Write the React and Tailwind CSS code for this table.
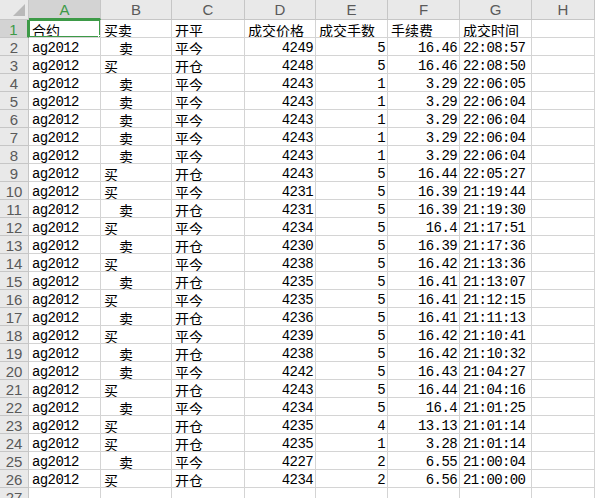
import React from 'react';

const rows = [
    ['ag2012', 's', '平今', '4249', '5', '16.46', '22:08:57'],
    ['ag2012', 'b', '开仓', '4248', '5', '16.46', '22:08:50'],
    ['ag2012', 's', '平今', '4243', '1', '3.29', '22:06:05'],
    ['ag2012', 's', '平今', '4243', '1', '3.29', '22:06:04'],
    ['ag2012', 's', '平今', '4243', '1', '3.29', '22:06:04'],
    ['ag2012', 's', '平今', '4243', '1', '3.29', '22:06:04'],
    ['ag2012', 's', '平今', '4243', '1', '3.29', '22:06:04'],
    ['ag2012', 'b', '开仓', '4243', '5', '16.44', '22:05:27'],
    ['ag2012', 'b', '平今', '4231', '5', '16.39', '21:19:44'],
    ['ag2012', 's', '开仓', '4231', '5', '16.39', '21:19:30'],
    ['ag2012', 'b', '平今', '4234', '5', '16.4', '21:17:51'],
    ['ag2012', 's', '开仓', '4230', '5', '16.39', '21:17:36'],
    ['ag2012', 'b', '平今', '4238', '5', '16.42', '21:13:36'],
    ['ag2012', 's', '开仓', '4235', '5', '16.41', '21:13:07'],
    ['ag2012', 'b', '平今', '4235', '5', '16.41', '21:12:15'],
    ['ag2012', 's', '开仓', '4236', '5', '16.41', '21:11:13'],
    ['ag2012', 'b', '平今', '4239', '5', '16.42', '21:10:41'],
    ['ag2012', 's', '开仓', '4238', '5', '16.42', '21:10:32'],
    ['ag2012', 's', '平今', '4242', '5', '16.43', '21:04:27'],
    ['ag2012', 'b', '开仓', '4243', '5', '16.44', '21:04:16'],
    ['ag2012', 's', '平今', '4234', '5', '16.4', '21:01:25'],
    ['ag2012', 'b', '开仓', '4235', '4', '13.13', '21:01:14'],
    ['ag2012', 'b', '开仓', '4235', '1', '3.28', '21:01:14'],
    ['ag2012', 's', '平今', '4227', '2', '6.55', '21:00:04'],
    ['ag2012', 'b', '开仓', '4234', '2', '6.56', '21:00:00'],
];

const headers = ['合约', '买卖', '开平', '成交价格', '成交手数', '手续费', '成交时间'];
const letters = ['A', 'B', 'C', 'D', 'E', 'F', 'G', 'H'];

const cjk = "font-['Noto_Sans_CJK_SC',sans-serif] text-[14px]";
const mono = "font-['Liberation_Mono','Noto_Sans_CJK_SC',monospace] text-[14px] tracking-[-0.6px]";
const cell = 'h-[18px] pt-[2px] border-r border-b border-[#d4d4d4] flex items-center overflow-hidden whitespace-nowrap text-black leading-none';
const rowHead = 'h-[18px] pt-[1px] border-r border-b border-[#c6c6c6] bg-[#e9e9e9] flex items-center justify-center text-[#5a5a5a] text-[15px] font-[\'Liberation_Sans\',sans-serif] leading-none';

export default function App() {
    return (
        <div className="w-[595px] h-[498px] overflow-hidden bg-white">
            <div className="grid grid-cols-[29px_72px_71px_73px_71px_72px_72px_72px_1fr]">
                {/* corner */}
                <div className="h-[20px] border-r border-b border-[#c6c6c6] bg-[#e9e9e9] flex items-end justify-end p-[3px]">
                    <div className="w-0 h-0 border-l-[12px] border-l-transparent border-b-[12px] border-b-[#b9b9b9]" />
                </div>
                {letters.map((l, i) => (
                    <div
                        key={l}
                        className={`h-[20px] border-r border-[#c6c6c6] flex items-center justify-center text-[15px] font-['Liberation_Sans',sans-serif] leading-none ${i === 0 ? 'bg-[#d3d3d3] text-[#3d9a47] border-b-2 border-b-[#3d9a47]' : 'bg-[#e9e9e9] text-[#5a5a5a] border-b'}`}
                    >
                        {l}
                    </div>
                ))}

                {/* row 1 */}
                <div className={`${rowHead} !bg-[#d3d3d3] !text-[#3d9a47] !border-r-2 !border-r-[#3d9a47]`}>1</div>
                {headers.map((h, i) => (
                    <div key={h} className={`${cell} ${cjk} pl-[3px] relative`}>
                        {h}
                        {i === 0 && (
                            <>
                                <div className="absolute -left-px -top-px -right-px -bottom-px border-2 border-[#3d9a47]" />
                                <div className="absolute -right-[4px] -bottom-[4px] w-[6px] h-[6px] bg-[#3d9a47] border border-white" />
                            </>
                        )}
                    </div>
                ))}
                <div className={cell} />

                {rows.map((r, idx) => (
                    <React.Fragment key={idx}>
                        <div className={rowHead}>{idx + 2}</div>
                        <div className={`${cell} ${mono} pl-[3px]`}>{r[0]}</div>
                        <div className={`${cell} ${cjk} ${r[1] === 's' ? 'pl-[18px]' : 'pl-[3px]'}`}>{r[1] === 's' ? '卖' : '买'}</div>
                        <div className={`${cell} ${cjk} pl-[3px]`}>{r[2]}</div>
                        <div className={`${cell} ${mono} justify-end pr-[2px]`}>{r[3]}</div>
                        <div className={`${cell} ${mono} justify-end pr-[2px]`}>{r[4]}</div>
                        <div className={`${cell} ${mono} justify-end pr-[2px]`}>{r[5]}</div>
                        <div className={`${cell} ${mono} pl-[3px]`}>{r[6]}</div>
                        <div className={cell} />
                    </React.Fragment>
                ))}

                <div className={rowHead}>27</div>
                {letters.map((l) => (
                    <div key={l} className={cell} />
                ))}
            </div>
        </div>
    );
}
